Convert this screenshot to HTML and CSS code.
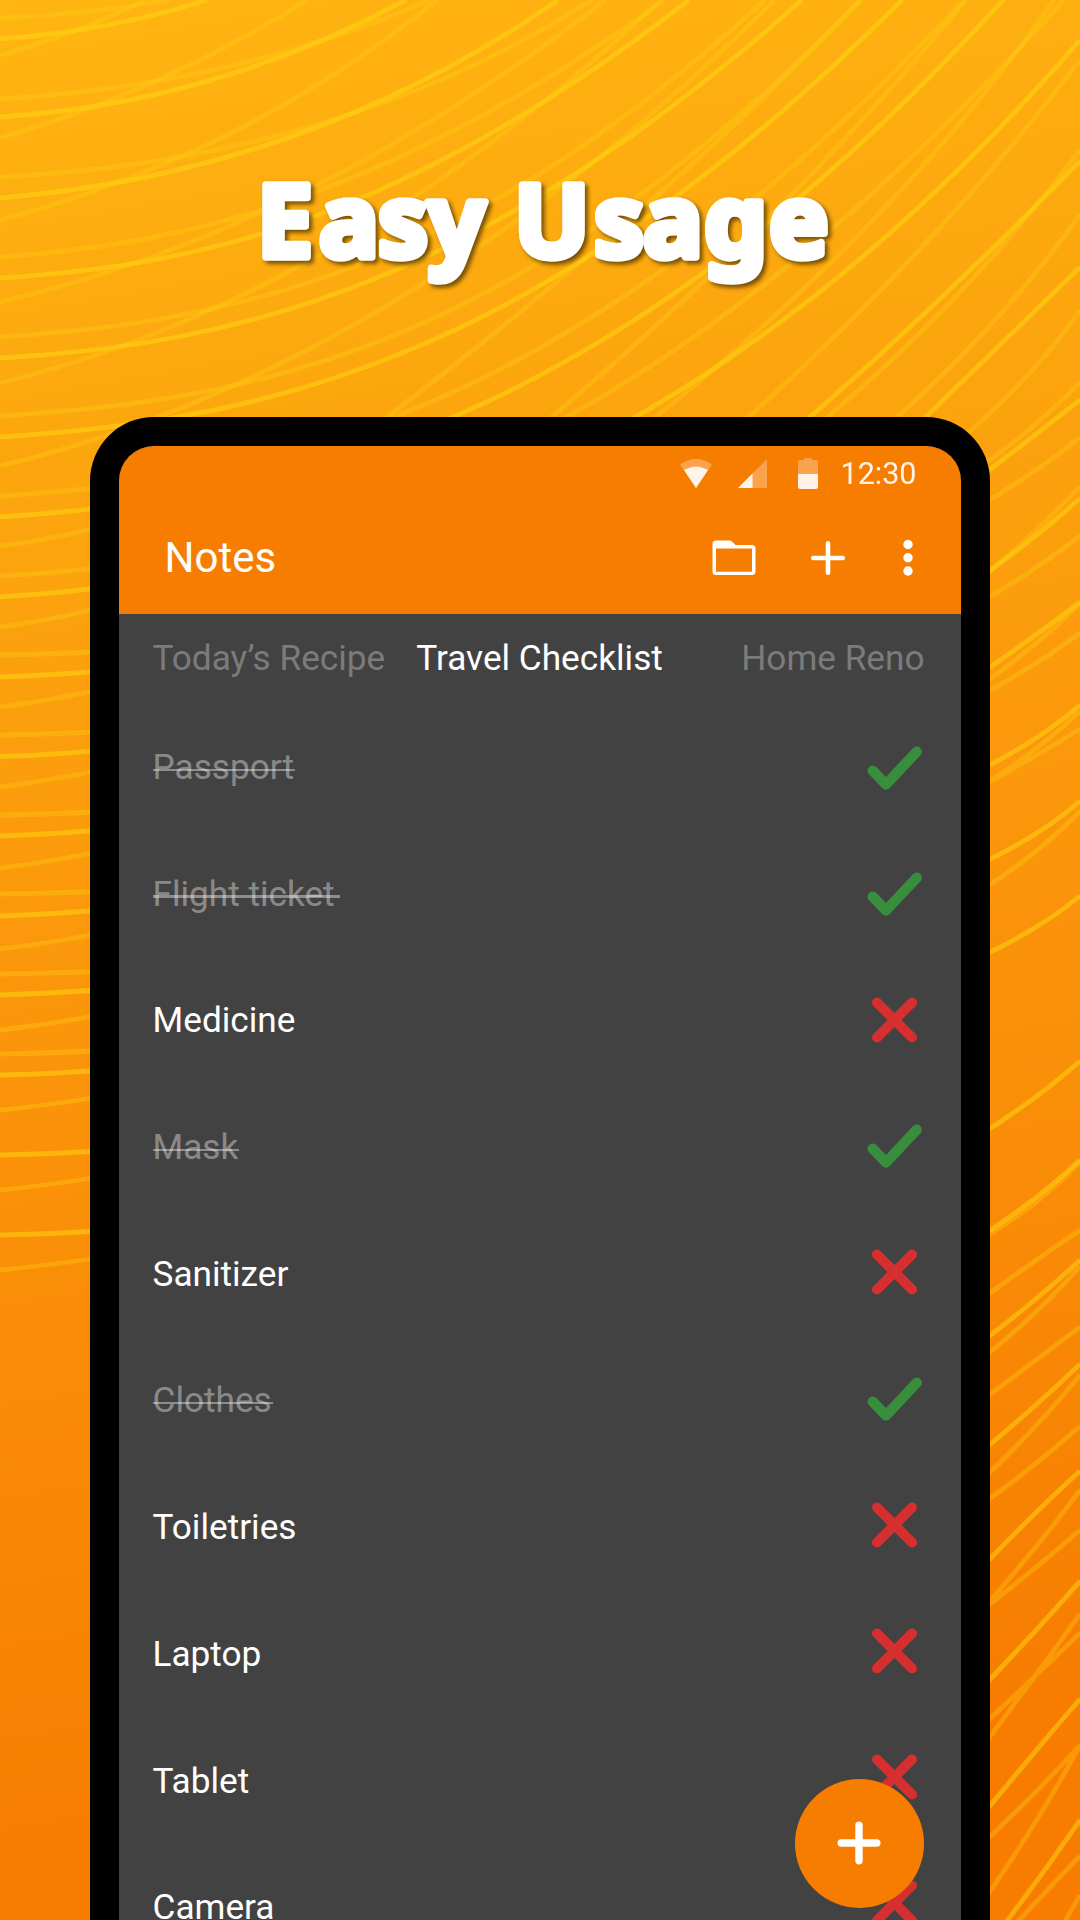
FILE: index.html
```html
<!DOCTYPE html>
<html lang="en">
<head>
<meta charset="utf-8">
<title>Notes - Easy Usage</title>
<link rel="stylesheet" href="styles.css">
</head>
<body>
<svg class="defs" width="0" height="0" aria-hidden="true">
  <symbol id="check" viewBox="0 0 56 46"><path d="M6.7 25.7L20 39.5L50.7 6.7" fill="none" stroke="#388e3c" stroke-width="10.4" stroke-linecap="round" stroke-linejoin="round"/></symbol>
  <symbol id="cross" viewBox="0 0 56 46"><path d="M11 5.5L46 40.5M46 5.5L11 40.5" fill="none" stroke="#d62f2f" stroke-width="10" stroke-linecap="round"/></symbol>
</svg>
<main class="promo">
  <svg class="waves" viewBox="0 0 1080 1920" aria-hidden="true">
    <g class="wave-bright">
      <path d="M0 39Q110 31 207 0"/>
      <path d="M0 117Q215 103 406 0"/>
      <path d="M0 198Q310 172 558 0"/>
      <path d="M0 278C210 265 410 215 689 0"/>
      <path d="M0 358C240 344 480 285 802 0"/>
      <path d="M0 437C270 420 540 360 902 0"/>
      <path d="M0 517C300 497 615 425 1005 -2"/>
      <path d="M0 597C330 575 700 480 1080 40"/>
      <path d="M760 460Q920 325 1080 161"/>
      <path d="M860 480Q980 365 1080 267"/>
      <path d="M920 522Q1010 455 1080 400"/>
      <path d="M980 578Q1040 535 1080 498"/>
      <path d="M980 674Q1040 633 1080 602"/>
      <path d="M0 677Q60 675 110 670M0 756.5Q60 755 110 749M0 836Q60 834 110 829M0 916Q60 914 110 909M0 995Q60 993 110 989M0 1075Q60 1074 110 1069M0 1155Q60 1154 110 1150M0 1235Q60 1234 110 1230"/>
      <path d="M980 770Q1040 740 1080 705M980 864Q1040 836 1080 801M980 957Q1040 929 1080 896M980 1135Q1040 1097 1080 1061M980 1237Q1040 1198 1080 1160M980 1343Q1040 1298 1080 1260M980 1453Q1040 1403 1080 1364M980 1569Q1040 1507 1080 1471M980 1690Q1040 1627 1080 1581M980 1818Q1040 1745 1080 1699M1000 1930Q1040 1878 1080 1820"/>
    </g>
    <g class="wave-soft">
      <path d="M0 18Q85 15 169 0"/>
      <path d="M0 99Q235 85 430 0"/>
      <path d="M0 177Q340 160 592 0"/>
      <path d="M0 257C200 243 400 190 665 0"/>
      <path d="M0 337C235 322 470 270 765 0"/>
      <path d="M0 416C258 400 520 350 860 0"/>
      <path d="M0 496C290 478 580 410 964 0"/>
      <path d="M0 576C320 558 650 460 1064 0"/>
      <path d="M0 55Q75 35 145 0"/>
      <path d="M0 138Q165 90 307 0"/>
      <path d="M0 220Q245 155 437 0"/>
      <path d="M0 302Q310 230 605 0"/>
      <path d="M0 383Q340 300 661 0"/>
      <path d="M0 466Q400 370 775 0"/>
      <path d="M330 460Q640 230 861 0"/>
      <path d="M500 460Q770 240 966 0"/>
      <path d="M600 460Q880 250 1054 0"/>
      <path d="M700 460Q920 270 1080 60"/>
      <path d="M800 440Q960 310 1080 150"/>
      <path d="M870 440Q990 340 1080 215"/>
      <path d="M960 440Q1040 370 1080 310"/>
      <path d="M0 655Q60 654 110 651M0 735Q60 734 110 731M0 815Q60 814 110 811M0 894Q60 893 110 891M0 974Q60 973 110 971M0 1054Q60 1053 110 1050"/>
      <path d="M0 546Q60 539 110 523M0 627Q60 619 110 605M0 707Q60 699 110 687M0 787Q60 779 110 768M0 868Q60 861 110 849M0 949Q60 942 110 931M0 1030Q60 1023 110 1013M0 1110Q60 1104 110 1095M0 1190Q60 1184 110 1175M0 1270Q60 1264 110 1256"/>
      <path d="M980 467Q1040 425 1080 382M980 506Q1040 470 1080 437M980 579Q1040 530 1080 486M980 603Q1040 567 1080 536M980 696Q1040 663 1080 633M980 686Q1040 644 1080 603M980 787Q1040 754 1080 729M980 787Q1040 750 1080 711M980 891Q1040 853 1080 811"/>
      <path d="M980 1240Q1040 1205 1080 1162M980 1300Q1040 1257 1080 1230M980 1360Q1040 1313 1080 1266M980 1402Q1040 1357 1080 1327M980 1482Q1040 1425 1080 1375M980 1506Q1040 1462 1080 1426M980 1612Q1040 1545 1080 1490M980 1612Q1040 1565 1080 1530M980 1728Q1040 1672 1080 1633M980 1750Q1040 1670 1080 1614M980 1846Q1040 1790 1080 1745M980 1906Q1040 1820 1080 1745M1010 1930Q1050 1887 1080 1856M1060 1930L1080 1895"/>
    </g>
  </svg>

  <header class="hero">
    <svg class="hero-title" viewBox="0 0 1080 417" role="img">
      <text y="256.500"><tspan x="257 319 378 428">Easy</tspan> <tspan x="514 594 643 704 769">Usage</tspan></text>
    </svg>
  </header>

  <section class="phone">
    <div class="screen">
      <div class="top">
        <div class="status">
          <svg class="wifi" viewBox="0 0 32 29"><path d="M0 5.5Q16-5.5 32 5.5L16 29z" fill="#fff" opacity=".3"/><path d="M4 11Q16 4 28 11L16 29z" fill="#fff" opacity=".88"/></svg>
          <svg class="signal" viewBox="0 0 29 29"><path d="M29 0V29H0z" fill="#fff" opacity=".3"/><path d="M14.5 14.5V29H0z" fill="#fff" opacity=".88"/></svg>
          <svg class="battery" viewBox="0 0 20 31"><path d="M6 0h8v2h4q2 0 2 2v12H0V4q0-2 2-2h4z" fill="#fff" opacity=".3"/><path d="M0 16h20v13q0 2-2 2H2q-2 0-2-2z" fill="#fff" opacity=".9"/></svg>
          <span class="clock">12:30</span>
        </div>
        <div class="appbar">
          <h1>Notes</h1>
          <svg class="folder" viewBox="0 0 44 36"><path fill-rule="evenodd" fill="#fff" d="M4 .5H17.5Q19 .5 20 1.5L23.500 5H40Q43.500 5 43.500 8.500V31.500Q43.500 35 40 35H4Q.5 35 .5 31.500V4Q.5 .5 4 .5zM4 8.500V31.700H40V8.500z"/></svg>
          <svg class="add" viewBox="0 0 36 36"><path d="M18 3.300V32.700M3.300 18H32.700" stroke="#fff" stroke-width="4.600" stroke-linecap="round"/></svg>
          <svg class="more" viewBox="0 0 10 38"><g fill="#fff"><circle cx="5" cy="5.500" r="4.700"/><circle cx="5" cy="18.700" r="4.700"/><circle cx="5" cy="32" r="4.700"/></g></svg>
        </div>
      </div>
      <nav class="tabs">
        <span>Today’s Recipe</span>
        <span class="active">Travel Checklist</span>
        <span class="next">Home Reno</span>
      </nav>
      <div class="list">
        <ul class="names">
          <li><span class="done">Passport</span></li>
          <li><span class="done trailing">Flight ticket</span></li>
          <li><span>Medicine</span></li>
          <li><span class="done">Mask</span></li>
          <li><span>Sanitizer</span></li>
          <li><span class="done">Clothes</span></li>
          <li><span>Toiletries</span></li>
          <li><span>Laptop</span></li>
          <li><span>Tablet</span></li>
          <li><span>Camera</span></li>
        </ul>
        <ul class="marks">
          <li><svg><use href="#check"/></svg></li>
          <li><svg><use href="#check"/></svg></li>
          <li><svg><use href="#cross"/></svg></li>
          <li><svg><use href="#check"/></svg></li>
          <li><svg><use href="#cross"/></svg></li>
          <li><svg><use href="#check"/></svg></li>
          <li><svg><use href="#cross"/></svg></li>
          <li><svg><use href="#cross"/></svg></li>
          <li><svg><use href="#cross"/></svg></li>
          <li><svg><use href="#cross"/></svg></li>
        </ul>
      </div>
      <div class="fab"><svg viewBox="0 0 44 44"><path d="M22 4.200V39.800M4.200 22H39.800" stroke="#fff" stroke-width="7.400" stroke-linecap="round"/></svg></div>
    </div>
  </section>
</main>
</body>
</html>
```
FILE: styles.css
```css
* { box-sizing: border-box; }

body {
  margin: 0;
  font-family: Roboto, "Liberation Sans", sans-serif;
  color: #fff;
}

svg { display: block; flex: none; }
.defs { position: absolute; }

.promo {
  position: relative;
  width: 1080px;
  height: 1920px;
  overflow: hidden;
  background: linear-gradient(170deg, #ffb512 0%, #fca60e 22%, #fb970b 46%, #f98a06 68%, #f77c00 90%);
}

/* decorative background */
.waves {
  position: absolute;
  inset: 0;
  width: 1080px;
  height: 1920px;
  fill: none;
}
.wave-bright { stroke: #ffd90f; stroke-width: 4.8; stroke-opacity: .5; }
.wave-soft { stroke: #ffd012; stroke-width: 4.8; stroke-opacity: .34; }

.hero { position: relative; height: 417px; }
.hero-title {
  width: 1080px;
  height: 417px;
  font: 700 100px "Noto Sans", "Open Sans", sans-serif;
  fill: #fff;
  stroke: #fff;
  stroke-width: 7.500px;
  stroke-linejoin: round;
  filter: drop-shadow(3px 3px 2px rgba(70, 45, 0, .75));
}

.phone {
  position: relative;
  width: 900px;
  height: 1503px;
  margin: 0 auto;
  padding: 29px 29px 0 29px;
  background: #000;
  border-radius: 64px 64px 0 0;
}
.screen {
  position: relative;
  height: 1474px;
  overflow: hidden;
  background: #424242;
  border-radius: 35px 35px 0 0;
}
.top { background: #f77d00; height: 168px; }

.status {
  display: flex;
  align-items: center;
  justify-content: flex-end;
  height: 55px;
  padding-right: 44.500px;
}
.wifi { width: 32px; height: 29px; margin-right: 26px; }
.signal { width: 29px; height: 29px; margin-right: 31px; }
.battery { width: 20px; height: 31px; margin-right: 22.500px; }
.clock { font-size: 30.500px; line-height: 56px; opacity: .9; }

.appbar {
  display: flex;
  align-items: center;
  height: 113px;
  padding: 0 48.500px 0 45.500px;
}
.appbar h1 {
  flex: 1;
  margin: 0;
  font-size: 42px;
  font-weight: 400;
  line-height: 113px;
}
.folder { width: 44px; height: 36px; margin-right: 54.500px; }
.add { width: 36px; height: 36px; margin-right: 56.500px; }
.more { width: 10px; height: 38px; }

.tabs {
  display: flex;
  height: 89px;
  padding: 0 36.500px 0 33.500px;
  font-size: 35.200px;
  line-height: 88.400px;
  color: #7b7b7b;
  white-space: nowrap;
}
.tabs .active { margin-left: 31px; color: #fff; }
.tabs .next { margin-left: auto; }

.list {
  display: flex;
  justify-content: space-between;
  padding: 0 39px 0 33.500px;
}
.list ul { margin: 0; padding: 0; list-style: none; }
.list .names { padding-top: 1px; }
.list .marks { padding-top: 1.500px; }
.names li {
  height: 126.700px;
  font-size: 35.200px;
  line-height: 126.700px;
}
.names span { position: relative; display: inline-block; }
.done { color: rgba(255, 255, 255, .4); }
.done::after {
  content: "";
  position: absolute;
  left: 0;
  right: -1px;
  top: 64.500px;
  height: 2.500px;
  background: rgba(255, 255, 255, .4);
}
.trailing::after { right: -5px; }
.marks li { display: flex; align-items: center; height: 126.200px; }
.marks svg { width: 56px; height: 46px; }

.fab {
  position: absolute;
  left: 675.500px;
  top: 1332.500px;
  width: 129.500px;
  height: 129.500px;
  display: grid;
  place-items: center;
  background: #f77d00;
  border-radius: 50%;
}
.fab svg { width: 44px; height: 44px; }
```
